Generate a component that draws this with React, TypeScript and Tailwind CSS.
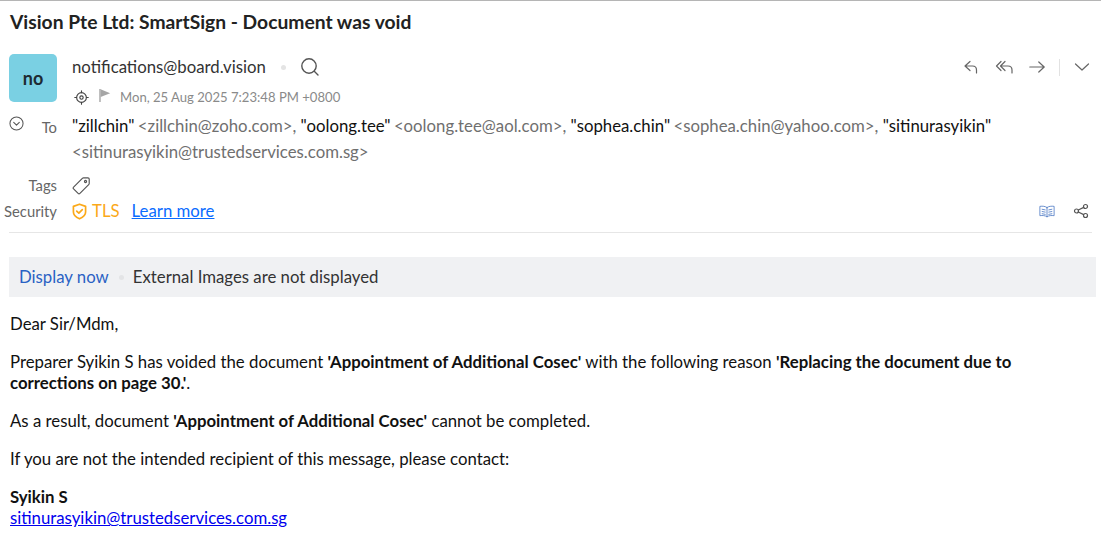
import React from 'react'

const Q = ({ name, email, comma }: { name: string; email: string; comma?: boolean }) => (
  <>
    <span className="text-[#111]">"{name}"</span>{' '}
    <span className={comma ? 'ml-[-1px] text-[#6f6f6f]' : 'text-[#6f6f6f]'}>&lt;{email}&gt;{comma ? ', ' : ''}</span>
  </>
)

const ic = { fill: 'none', stroke: 'currentColor', strokeLinecap: 'round', strokeLinejoin: 'round' } as const

export default function App() {
  return (
    <div className="h-[542px] w-[1101px] overflow-hidden border-t border-[#b5b5b5] bg-white font-['Lato',sans-serif] text-[16.77px] text-black">
      {/* Subject */}
      <h1 className="mt-[8px] ml-[10px] h-[26px] text-[19.25px] leading-[26px] font-bold text-[#222]">Vision Pte Ltd: SmartSign - Document was void</h1>

      {/* Sender */}
      <div className="mt-[19px] flex pr-[11px] pl-[9px]">
        <div className="flex h-[48px] w-[48px] items-center justify-center rounded-[5px] bg-[#7ad0e3] text-[18px] font-bold text-[#1d2b33]">no</div>
        <div className="ml-[15px] flex-1">
          <div className="flex h-[26px] items-center text-[#333]">
            <span className="leading-[26px]">notifications@board.vision</span>
            <span className="mr-[14px] ml-[15px] h-[5px] w-[5px] rounded-full bg-[#e4e4e4]" />
            <svg viewBox="0 0 20 20" className="h-[20px] w-[20px] text-[#555]" {...ic} strokeWidth="1.4">
              <circle cx="9" cy="9" r="7.2" />
              <path d="M14.5 14.5 18 18" />
            </svg>
          </div>
          <div className="mt-[7px] flex h-[20px] items-center">
            <svg viewBox="0 0 16 16" className="ml-[2px] h-[15px] w-[15px] text-[#444]" {...ic} strokeWidth="1.2">
              <circle cx="8" cy="8" r="5.2" />
              <circle cx="8" cy="8" r="1.8" />
              <path d="M8 .8v2M8 13.2v2M.8 8h2M13.2 8h2" />
            </svg>
            <svg viewBox="0 0 14 16" className="mt-[-3px] ml-[9px] h-[15px] w-[14px]">
              <path d="M1 1h1.3v14H1z" fill="#999" />
              <path d="M2.3 1.2 12.5 5.6 2.3 9.6z" fill="#a6a6a6" />
            </svg>
            <span className="ml-[8px] text-[13.1px] leading-[20px] text-[#8a8a8a]">Mon, 25 Aug 2025 7:23:48 PM +0800</span>
          </div>
        </div>
        <div className="flex h-[26px] items-center text-[#666]">
          <svg viewBox="0 0 16 16" className="h-[16px] w-[16px]" {...ic} strokeWidth="1.2">
            <path d="M7 2.5 2 7l5 4.5M2 7h7.5c2.500 0 4 1.500 4 4v3" />
          </svg>
          <svg viewBox="0 0 20 16" className="ml-[16px] h-[16px] w-[20px]" {...ic} strokeWidth="1.2">
            <path d="M6 2.500 1.500 7 6 11.500M10 2.500 5.500 7l4.500 4.500M5.500 7H13c2.500 0 4 1.500 4 4v3" />
          </svg>
          <svg viewBox="0 0 16 16" className="ml-[14px] h-[16px] w-[16px]" {...ic} strokeWidth="1.2">
            <path d="M.8 8h14.400M9.800 3l5.400 5-5.400 5" />
          </svg>
          <span className="mr-[14px] ml-[14px] h-[17px] w-px bg-[#e2e2e2]" />
          <svg viewBox="0 0 16 16" className="h-[16px] w-[16px]" {...ic} strokeWidth="1.2">
            <path d="M1.500 5 8 11l6.500-6" />
          </svg>
        </div>
      </div>

      {/* Recipients */}
      <div className="mt-[6px] flex">
        <div className="flex w-[72px] shrink-0 pt-[7px] pr-[15px] pl-[9px]">
          <svg viewBox="0 0 16 16" className="mt-[-4px] h-[15px] w-[15px] text-[#555]" {...ic} strokeWidth="1.1">
            <circle cx="8" cy="8" r="7" />
            <path d="M5 6.800 8 9.800l3-3" />
          </svg>
          <span className="mt-[-3px] ml-auto text-[14.8px] leading-[20px] text-[#666]">To</span>
        </div>
        <div className="w-[940px] leading-[26px]">
          <Q name="zillchin" email="zillchin@zoho.com" comma /> <Q name="oolong.tee" email="oolong.tee@aol.com" comma /> <Q name="sophea.chin" email="sophea.chin@yahoo.com" comma /> <Q name="sitinurasyikin" email="sitinurasyikin@trustedservices.com.sg" />
        </div>
      </div>

      {/* Tags */}
      <div className="mt-[7px] flex h-[26px] items-center">
        <span className="w-[57px] text-right text-[14.8px] text-[#666]">Tags</span>
        <svg viewBox="0 0 18 18" className="ml-[15px] h-[19px] w-[19px] text-[#555]" {...ic} strokeWidth="1.1">
          <path d="M1.500 10.500 9.800 2.200c.3-.3.7-.5 1.100-.5h4.200c.7 0 1.200.5 1.200 1.200v4.200c0 .4-.2.8-.5 1.100L7.500 16.500c-.5.5-1.200.5-1.700 0l-4.300-4.300c-.5-.5-.5-1.200 0-1.700z" />
          <circle cx="12.800" cy="5.200" r="1" />
        </svg>
      </div>

      {/* Security */}
      <div className="flex h-[26px] items-center pr-[12px]">
        <span className="w-[57px] text-right text-[14.8px] text-[#666]">Security</span>
        <svg viewBox="0 0 16 18" className="ml-[15px] h-[17px] w-[15px] text-[#fba919]" {...ic} strokeWidth="1.800">
          <path d="M8 1.200 14.500 3.500v6c0 3.500-3 5.800-6.500 7.300C4.500 15.300 1.500 13 1.500 9.500v-6z" />
          <path d="m5 8.500 2.300 2.300L11 7" />
        </svg>
        <span className="ml-[5px] text-[#fba919]">TLS</span>
        <a href="#" className="ml-[12px] text-[#0a6cff] underline">Learn more</a>
        <svg viewBox="0 0 18 16" className="ml-auto h-[15px] w-[16px] text-[#5b84c9]" {...ic} strokeWidth="1">
          <path d="M9 3.500C7 2 4 1.800 1 2.200v10.500c3-.4 6-.2 8 1.300 2-1.500 5-1.700 8-1.300V2.200C14 1.800 11 2 9 3.500zM9 3.500V14M3.500 5.500 7 6.200M3.500 8 7 8.700M3.500 10.500 7 11.200M14.500 5.500 11 6.200M14.500 8 11 8.700M14.500 10.500 11 11.200" />
        </svg>
        <svg viewBox="0 0 16 16" className="ml-[18px] h-[16px] w-[16px] text-[#555]" {...ic} strokeWidth="1.200">
          <circle cx="3.500" cy="8" r="2" />
          <circle cx="12.500" cy="3.500" r="2" />
          <circle cx="12.500" cy="12.500" r="2" />
          <path d="m5.300 7 5.400-2.600M5.300 9l5.400 2.600" />
        </svg>
      </div>
      <div className="mx-[9px] mt-[8px] h-px bg-[#e6e6e6]" />

      {/* Images banner */}
      <div className="mt-[24px] mr-[5px] ml-[9px] flex h-[40px] items-center bg-[#f0f1f3] px-[10px]">
        <a href="#" className="text-[#2a62c4]">Display now</a>
        <span className="mr-[9px] ml-[10px] h-[5px] w-[5px] rounded-full bg-[#e3e4e6]" />
        <span className="text-[#333]">External Images are not displayed</span>
      </div>

      {/* Message body */}
      <div className="mt-[16px] ml-[10px] w-[1040px] leading-[21px] text-[#111]">
        <p>Dear Sir/Mdm,</p>
        <p className="mt-[17px]">Preparer Syikin S has voided the document <b>'Appointment of Additional Cosec'</b> with the following reason <b>'Replacing the document due to corrections on page 30.'</b>.</p>
        <p className="mt-[17px]">As a result, document <b>'Appointment of Additional Cosec'</b> cannot be completed.</p>
        <p className="mt-[17px]">If you are not the intended recipient of this message, please contact:</p>
        <p className="mt-[17px] font-bold">Syikin S</p>
        <a href="#" className="text-[#0000ee] underline">sitinurasyikin@trustedservices.com.sg</a>
      </div>
    </div>
  )
}
